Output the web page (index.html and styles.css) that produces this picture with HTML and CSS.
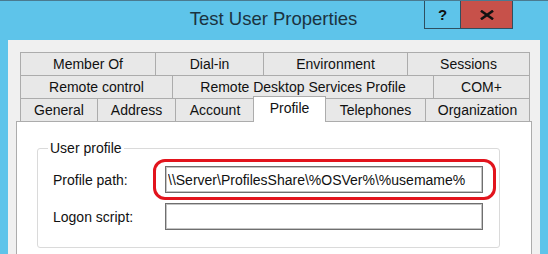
FILE: index.html
```html
<!DOCTYPE html>
<html lang="en">
<head>
    <meta charset="UTF-8">
    <meta name="viewport" content="width=device-width, initial-scale=1.0">
    <title>Test User Properties</title>
    <link rel="stylesheet" href="styles.css">
</head>
<body>
    <div class="window">
        <div class="titlebar">
            <div class="title">Test User Properties</div>
            <div class="caption-buttons">
                <div class="caption-btn help">?</div>
                <div class="caption-btn close">
                    <svg width="14" height="10" viewBox="0 0 14 10">
                        <path d="M2 1.5 L12 8.5 M12 1.5 L2 8.5" stroke="#111" stroke-width="2.6" stroke-linecap="square"/>
                    </svg>
                </div>
            </div>
        </div>

        <div class="client">
            <div class="tabs">
                <div class="tab-row row-1">
                    <div class="tab">Member Of</div>
                    <div class="tab">Dial-in</div>
                    <div class="tab">Environment</div>
                    <div class="tab">Sessions</div>
                </div>
                <div class="tab-row row-2">
                    <div class="tab">Remote control</div>
                    <div class="tab">Remote Desktop Services Profile</div>
                    <div class="tab">COM+</div>
                </div>
                <div class="tab-row row-3">
                    <div class="tab">General</div>
                    <div class="tab">Address</div>
                    <div class="tab">Account</div>
                    <div class="tab selected">Profile</div>
                    <div class="tab">Telephones</div>
                    <div class="tab">Organization</div>
                </div>
            </div>

            <div class="panel">
                <fieldset class="group">
                    <legend>User profile</legend>
                    <div class="fields">
                        <label for="profilePath">Profile path:</label>
                        <div class="highlight">
                            <input type="text" id="profilePath" value="\\Server\ProfilesShare\%OSVer%\%usemame%">
                        </div>
                        <label for="logonScript">Logon script:</label>
                        <input type="text" id="logonScript">
                    </div>
                </fieldset>
            </div>
        </div>
    </div>
</body>
</html>
```

FILE: styles.css
```css
body {
    margin: 0;
    background: #5ec4ea;
    font-family: "Liberation Sans", Arial, sans-serif;
    font-size: 14px;
    color: #111;
}
.window {
    height: 254px;
    display: flex;
    flex-direction: column;
    border-top: 1px solid #4a7a90;
    box-sizing: border-box;
    overflow: hidden;
}
.titlebar {
    height: 39px;
    display: flex;
    padding: 0 8px;
}
.title {
    flex: 1;
    text-align: center;
    padding-left: 115px;
    padding-top: 7px;
    font-size: 18.5px;
    color: #1b3340;
}
.caption-buttons {
    display: flex;
    align-self: flex-start;
    margin-right: 27px;
    border: 1px solid #2e4f60;
    border-top: none;
}
.caption-btn {
    height: 27px;
    display: flex;
    align-items: center;
    justify-content: center;
}
.help {
    width: 35px;
    font-weight: bold;
    font-size: 15px;
    color: #111;
    border-right: 1px solid #2e4f60;
}
.close {
    width: 51px;
    background: #c7514a;
}
.client {
    flex: 1;
    margin: 0 8px;
    padding: 12px 8px 0;
    background: #f0f0f0;
    display: flex;
    flex-direction: column;
}
.tabs {
    margin: 0 2px 0 4px;
}
.tab-row {
    display: grid;
}
.row-1 {
    grid-template-columns: 135px 108px 144px 123px;
}
.row-2 {
    grid-template-columns: 152px 261px 97px;
}
.row-3 {
    grid-template-columns: 77px 78px 79px 71px 100px 105px;
}
.tab {
    height: 22px;
    line-height: 22px;
    text-align: center;
    white-space: nowrap;
    background: #e8e8e8;
    border-top: 1px solid #acacac;
    border-left: 1px solid #acacac;
}
.tab:last-child {
    border-right: 1px solid #acacac;
}
.tab.selected {
    position: relative;
    z-index: 1;
    margin: -2px -1px -1px -1px;
    height: 25px;
    background: #fff;
    border-right: 1px solid #acacac;
}
.panel {
    flex: 1;
    background: #fff;
    border: 1px solid #acacac;
    border-bottom: none;
}
.group {
    width: 431px;
    margin: 18px 0 0 20px;
    padding: 10px 15px 17px;
    border: 1px solid #dadada;
    border-radius: 3px;
}
.group legend {
    padding: 0 2px;
    margin-left: -5px;
    line-height: 16px;
}
.fields {
    display: grid;
    grid-template-columns: 112px 318px;
    row-gap: 10px;
    align-items: center;
}
.fields input {
    box-sizing: border-box;
    width: 318px;
    height: 27px;
    margin: 0;
    padding: 0 2px;
    border: 1px solid #6f6f6f;
    box-shadow: inset 0 0 0 1px #c4c4c4;
    font-family: "Liberation Sans", Arial, sans-serif;
    font-size: 14px;
    color: #111;
    outline: none;
}
.highlight {
    position: relative;
    height: 27px;
}
.highlight::after {
    content: "";
    position: absolute;
    top: -7px;
    left: -12px;
    right: -13px;
    bottom: -7px;
    border: 3px solid #e2141d;
    border-radius: 12px;
}
```
